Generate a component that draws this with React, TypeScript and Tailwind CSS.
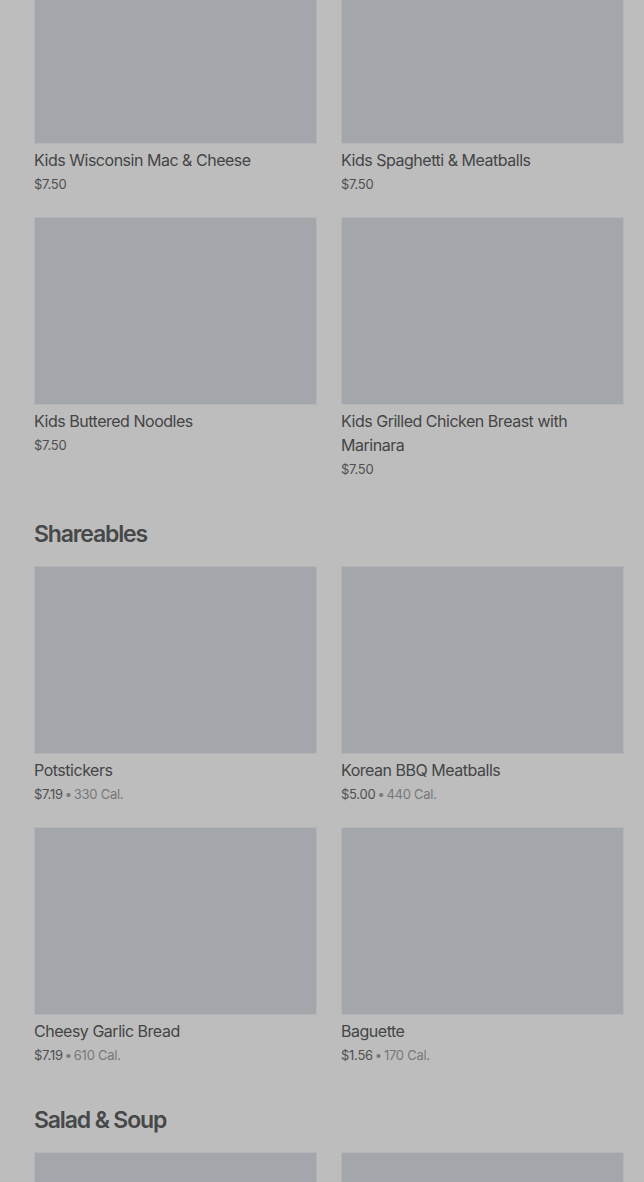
const kids = [
  { name: "Kids Wisconsin Mac & Cheese", price: "$7.50" },
  { name: "Kids Spaghetti & Meatballs", price: "$7.50" },
  { name: "Kids Buttered Noodles", price: "$7.50" },
  { name: "Kids Grilled Chicken Breast with Marinara", price: "$7.50" }
];

const shareables = [
  { name: "Potstickers", price: "$7.19", cal: "330 Cal." },
  { name: "Korean BBQ Meatballs", price: "$5.00", cal: "440 Cal." },
  { name: "Cheesy Garlic Bread", price: "$7.19", cal: "610 Cal." },
  { name: "Baguette", price: "$1.56", cal: "170 Cal." }
];

// only the photos of this row fit in the window
const salad = [{ name: "" }, { name: " " }];

type Item = { name: string; price?: string; cal?: string };

function MenuCard({ item }: { item: Item }) {
  return (
    <div className="flex flex-col">
      <div className="h-[188px] w-full border border-[#b3b5b8] bg-[#a3a6aa]" />
      {item.price && (
        <>
          <p className="mt-[4px] text-[16px] leading-6 tracking-[-0.03em] text-[#444546]">{item.name}</p>
          <p className="text-[13px] leading-6 tracking-[-0.02em] text-[#4f5052]">
            {item.price}
            {item.cal && (
              <>
                <span className="mx-[2px] text-[#7a7b7d]">•</span>
                <span className="text-[#77787a]">{item.cal}</span>
              </>
            )}
          </p>
        </>
      )}
    </div>
  );
}

function Section({ title, items }: { title?: string; items: Item[] }) {
  return (
    <section className="flex flex-col">
      {title && (
        <h2 className="mb-4 text-[23px] font-semibold leading-8 tracking-[-0.05em] text-[#474849]">{title}</h2>
      )}
      <div className="grid grid-cols-2 gap-x-6 gap-y-[21px]">
        {items.map((item) => (
          <MenuCard key={item.name} item={item} />
        ))}
      </div>
    </section>
  );
}

export default function App() {
  return (
    <div
      className="h-[1182px] overflow-hidden bg-[#bdbdbd]"
      style={{ fontFamily: "Inter, 'Noto Sans', sans-serif" }}
    >
      <div className="mt-[-44px] flex flex-col gap-[37px] pl-[34px] pr-[20px]">
        <Section items={kids} />
        <Section title="Shareables" items={shareables} />
        <Section title="Salad & Soup" items={salad} />
      </div>
    </div>
  );
}
